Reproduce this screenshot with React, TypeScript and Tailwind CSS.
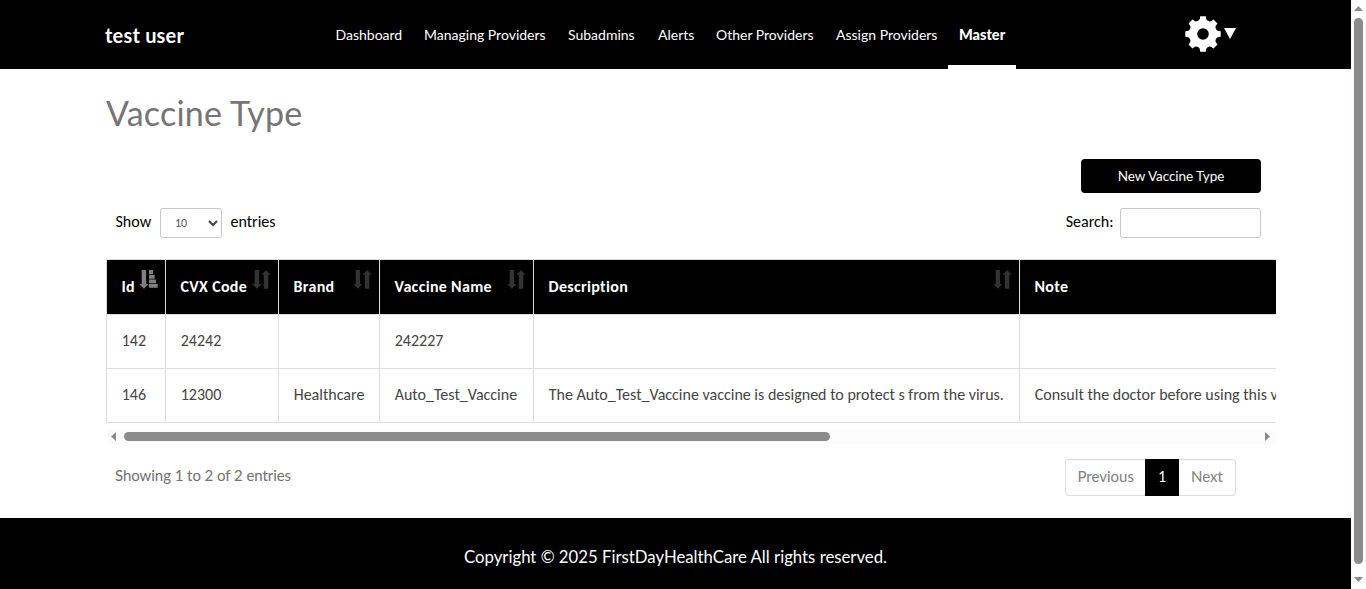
const UI = "font-['Lato',sans-serif]";

const nav = [
  { label: "Dashboard", box: "w-[88.5px]" },
  { label: "Managing Providers", box: "w-[144px]" },
  { label: "Subadmins", box: "w-[90px]" },
  { label: "Alerts", box: "w-[58px]" },
  { label: "Other Providers", box: "w-[120px]" },
  { label: "Assign Providers", box: "w-[122.5px]" },
];

const columns = ["Id", "CVX Code", "Brand", "Vaccine Name", "Description", "Note"];
const rows = [
  ["142", "24242", "", "242227", "", ""],
  [
    "146",
    "12300",
    "Healthcare",
    "Auto_Test_Vaccine",
    "The Auto_Test_Vaccine vaccine is designed to protect s from the virus.",
    "Consult the doctor before using this vaccine.",
  ],
];
const rowGrid = "grid grid-cols-[59px_113px_101px_154px_486px_420px] w-[1333px]";

function SortIcon({ active }: { active: boolean }) {
  return (
    <svg
      className={active ? "absolute right-[7px] top-[10px] text-[#808080]" : "absolute right-[7px] top-[10px] text-[#333333]"}
      width="18"
      height="19"
      viewBox="0 0 18 19"
      fill="currentColor"
      overflow="visible"
    >
      <path d="M1.7 0h4.4v14H8.5l-4.6 4.7L-.7 14h2.4z" />
      {active ? (
        <path d="M9 0h4v4H9zM9 4.8h5.6v3.9H9zM9 9.6h7v3.7H9zM9 14h8.7v3.8H9z" />
      ) : (
        <path d="M10.8 18.7V4.7H8.5L13.1 0l4.4 4.7h-2.2v14z" />
      )}
    </svg>
  );
}

// Eight flared teeth around the hub, joined by rounded valleys.
const gearPath = (() => {
  const pt = (r: number, deg: number) => {
    const a = (deg * Math.PI) / 180;
    return `${(18 + r * Math.cos(a)).toFixed(2)} ${(18 + r * Math.sin(a)).toFixed(2)}`;
  };
  let d = "";
  for (let i = 0; i < 8; i++) {
    const c = i * 45;
    d += `${i ? "L" : "M"}${pt(17.9, c - 9)}L${pt(17.9, c + 9)}L${pt(15, c + 12.5)}Q${pt(13, c + 22.5)} ${pt(15, c + 32.5)}`;
  }
  return `${d}ZM18 12.2a5.8 5.8 0 1 0 0 11.6 5.8 5.8 0 0 0 0-11.6z`;
})();

function Gear() {
  return (
    <svg width="36" height="36" viewBox="0 0 36 36" fill="#fff">
      <path fillRule="evenodd" d={gearPath} />
    </svg>
  );
}

function Header() {
  return (
    <header className={`${UI} flex h-[69px] bg-black pl-[105px] text-white`}>
      <div className="w-[220px] pt-[22px] text-[20px] font-bold leading-[26px] tracking-[0.2px]">test user</div>
      <nav className="flex text-[14px] leading-[20px]">
        {nav.map((n) => (
          <a key={n.label} className={`${n.box} whitespace-nowrap pl-[10.5px] pt-[25px]`}>
            {n.label}
          </a>
        ))}
        <a className="w-[68px] border-b-4 border-white pl-[11px] pt-[25px] text-[14.5px] font-black">Master</a>
      </nav>
      <div className="ml-[169px] flex pt-[16px]">
        <Gear />
        <svg className="ml-[3px] mt-[12px]" width="12" height="11" viewBox="0 0 12 11" fill="#fff">
          <path d="M0 0h12L6 11z" />
        </svg>
      </div>
    </header>
  );
}

function DataTable() {
  return (
    <div className="ml-[106px] mt-[21px] w-[1170px] overflow-hidden">
      <div className={`${rowGrid} h-[56px] border-y border-[#dddddd] bg-black`}>
        {columns.map((c, i) => (
          <div key={c} className="relative border-l border-[#dddddd] pl-[14.5px] pt-[17px] font-bold leading-[20px] tracking-[0.32px] text-white">
            {c}
            {i < 5 && <SortIcon active={i === 0} />}
          </div>
        ))}
      </div>
      {rows.map((r) => (
        <div key={r[0]} className={`${rowGrid} h-[54px] border-b border-[#dddddd] text-[#444444]`}>
          {r.map((v, i) => (
            <div key={i} className="whitespace-nowrap border-l border-[#dddddd] pl-[14.7px] pt-[16px] leading-[20px]">
              {v}
            </div>
          ))}
        </div>
      ))}
      <div className="mt-[6px] flex h-[15px] items-center bg-[#fcfcfc] pl-[5px] pr-[6px]">
        <svg width="5" height="9" viewBox="0 0 5 9" fill="#8b8b8b"><path d="M5 0v9L0 4.5z" /></svg>
        <div className="ml-[8px] h-[9px] w-[706px] rounded-full bg-[#8b8b8b]" />
        <svg className="ml-auto" width="5" height="9" viewBox="0 0 5 9" fill="#8b8b8b"><path d="M0 0v9l5-4.5z" /></svg>
      </div>
    </div>
  );
}

export default function App() {
  return (
    <div className="flex h-[589px] w-[1366px] overflow-hidden bg-white font-['Carlito','Lato',sans-serif] text-[16px]">
      <div className="flex w-[1351px] flex-col">
        <Header />
        <h1 className={`${UI} ml-[106px] mt-[22px] h-[68px] text-[34px] leading-[44px] tracking-[0.2px] text-[#757575]`}>Vaccine Type</h1>
        <button className={`${UI} ml-[1081px] h-[34px] w-[180px] rounded-[4px] bg-black text-center text-[13.5px] leading-[20px] tracking-[-0.05px] text-white`}>
          New Vaccine Type
        </button>
        <div className="ml-[115.5px] mr-[90px] mt-[15px] flex h-[30px] items-center leading-[20px] text-black">
          <span className="-mt-[2px] w-[44.5px]">Show</span>
          <div className="flex h-[30px] w-[62px] items-center justify-between rounded-[3px] border border-[#c9c9c9] pl-[14px] pr-[3px] text-[12px] text-[#555555]">
            10
            <svg width="10" height="7" viewBox="0 0 10 7" fill="none" stroke="#444" strokeWidth="2"><path d="M1 1l4 4 4-4" /></svg>
          </div>
          <span className="-mt-[2px] ml-[8.5px]">entries</span>
          <span className="-mt-[2px] ml-auto mr-[6.5px]">Search:</span>
          <input className="h-[30px] w-[141px] rounded-[3px] border border-[#c9c9c9]" />
        </div>
        <DataTable />
        <div className={`${UI} ml-[115px] mt-[15px] flex h-[59px] items-start text-[15px] leading-[20px] text-[#707070]`}>
          <span className="pt-[6px] tracking-[-0.06px]">Showing 1 to 2 of 2 entries</span>
          <div className="ml-auto mr-[115px] flex h-[37px] w-[171px] text-[#808080]">
            <span className="w-[80px] rounded-l-[4px] border border-r-0 border-[#dddddd] pl-[11.5px] pt-[6px]">Previous</span>
            <span className="w-[34px] bg-black pt-[8px] text-center font-['Carlito','Lato',sans-serif] text-[16px] text-white">1</span>
            <span className="w-[57px] rounded-r-[4px] border border-l-0 border-[#dddddd] pl-[12px] pt-[6px]">Next</span>
          </div>
        </div>
        <footer className={`${UI} flex-1 bg-black pt-[28px] text-center text-[16.75px] leading-[22px] text-white`}>
          Copyright © 2025 FirstDayHealthCare All rights reserved.
        </footer>
      </div>
      <div className="flex w-[15px] flex-col items-center bg-[#fcfcfc] pt-[6px]">
        <svg width="9" height="5" viewBox="0 0 9 5" fill="#8b8b8b"><path d="M0 5h9L4.5 0z" /></svg>
        <div className="mt-[7px] h-[546px] w-[9px] rounded-full bg-[#8b8b8b]" />
        <svg className="mt-[13px]" width="9" height="5" viewBox="0 0 9 5" fill="#8b8b8b"><path d="M0 0h9L4.5 5z" /></svg>
      </div>
    </div>
  );
}
